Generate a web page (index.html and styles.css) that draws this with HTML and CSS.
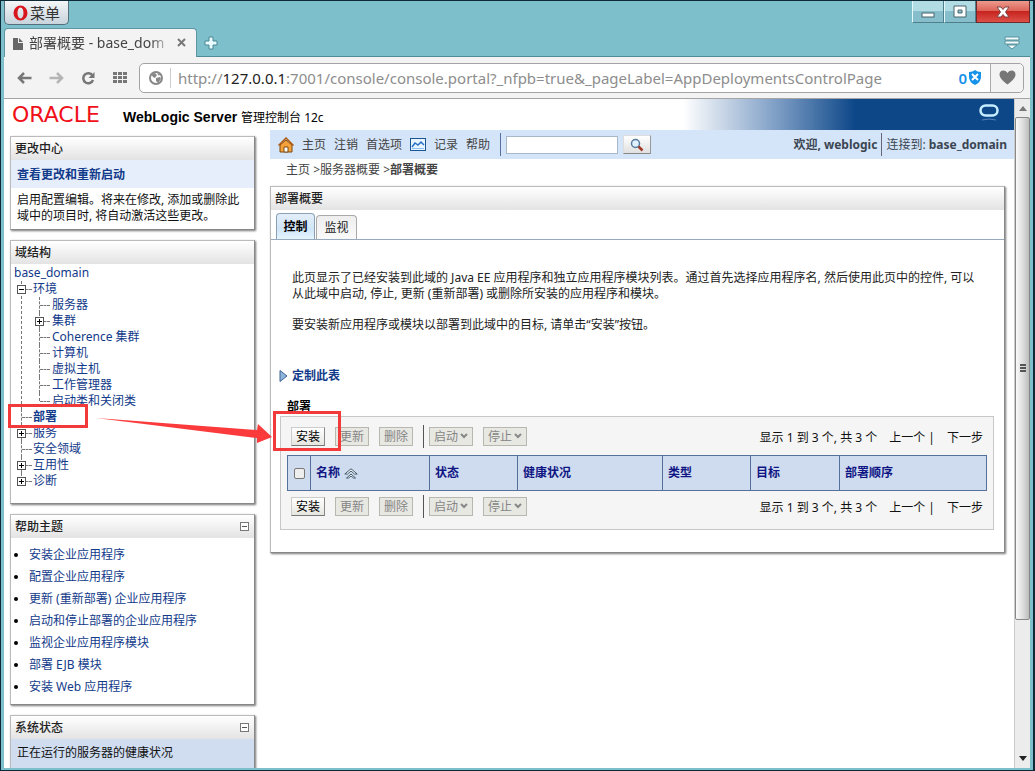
FILE: index.html
```html
<!DOCTYPE html>
<html lang="zh-CN">
<head>
<meta charset="utf-8">
<title>部署概要 - base_domain</title>
<link rel="stylesheet" href="styles.css">
</head>
<body>
<div class="window">
  <header class="titlebar">
    <button class="menu-btn" type="button">
      <svg width="15" height="16" viewBox="0 0 15 16"><path fill="#d8161d" fill-rule="evenodd" d="M7.500.5a7 7.500 0 1 1 0 15a7 7.500 0 0 1 0-15zM7.500 2.500c-4 0-4 11 0 11s4-11 0-11z"/></svg>
      菜单
    </button>
    <div class="win-btns">
      <button type="button" aria-label="最小化"><svg width="14" height="14"><rect x="1" y="8" width="12" height="4" fill="#fff" stroke="#49656b"/></svg></button>
      <button type="button" aria-label="最大化"><svg width="14" height="14"><path d="M1 1h12v11H1zM5 5h4v3H5z" fill="#fff" fill-rule="evenodd" stroke="#49656b"/></svg></button>
      <button type="button" class="close" aria-label="关闭"><svg width="14" height="14"><path d="M1 2h4l2 2.500L9 2h4L9.500 7l3.500 5H9L7 9.500 5 12H1l3.500-5z" fill="#fff" stroke="#7b4545"/></svg></button>
    </div>
  </header>
  <div class="tabstrip">
    <div class="tab">
      <svg width="12" height="13"><path d="M1 1h5v5h5v7H1zM7 1l4 4H7z" fill="#666"/></svg>
      <span class="tab-title">部署概要 - base_dom</span>
      <button type="button" class="plain" aria-label="关闭标签"><svg width="10" height="10"><path d="M1 1l7 7M8 1l-7 7" stroke="#777" stroke-width="2"/></svg></button>
    </div>
    <button type="button" class="plain newtab" aria-label="新标签"><svg width="14" height="14"><path d="M5 1h4v4h4v4H9v4H5V9H1V5h4z" fill="#e9fbff" stroke="#498793"/></svg></button>
    <button type="button" class="plain tabmenu" aria-label="标签菜单"><svg width="16" height="14"><path d="M1 1h14v3H1zM1 5h14v3H1zM3 9h10l-5 4z" fill="#f4feff" stroke="#58909b"/></svg></button>
  </div>
  <nav class="navbar">
    <button type="button" class="plain" aria-label="后退"><svg width="15" height="14"><path d="M7 2L2 7l5 5M2 7h12.500" fill="none" stroke="#777" stroke-width="2.500"/></svg></button>
    <button type="button" class="plain" aria-label="前进"><svg width="15" height="14"><path d="M8 2l5 5-5 5M13 7H.5" fill="none" stroke="#b5b5b5" stroke-width="2.500"/></svg></button>
    <button type="button" class="plain" aria-label="刷新"><svg width="15" height="14"><path d="M11.500 4.500A5 5 0 1 0 12 9" fill="none" stroke="#777" stroke-width="2.500"/><path d="M13.500 1v6H7.500z" fill="#777"/></svg></button>
    <button type="button" class="plain" aria-label="快速拨号"><svg width="15" height="14"><path d="M0 1h4v3H0zM5 1h4v3H5zM10 1h4v3h-4zM0 5h4v3H0zM5 5h4v3H5zM10 5h4v3h-4zM0 9h4v3H0zM5 9h4v3H5zM10 9h4v3h-4z" fill="#777"/></svg></button>
    <div class="address">
      <svg class="globe" width="16" height="16"><circle cx="8" cy="8" r="6" fill="#fff" stroke="#888" stroke-width="2"/><path d="M3 4l4-1 2 2-2 3-2-1zM8 8l4-1 1 2-3 4-2-2zM9 3l3 1-1 2z" fill="#888"/></svg>
      <span class="url">http://<b>127.0.0.1</b>:7001/console/console.portal?_nfpb=true&amp;_pageLabel=AppDeploymentsControlPage</span>
      <span class="blocked">0<svg width="12" height="15"><path d="M0 2q4 0 6-2 2 2 6 2v5q0 5-6 8-6-3-6-8z" fill="#1592ea"/><path d="M3 4l6 6M9 4l-6 6" stroke="#fff" stroke-width="2"/></svg></span>
      <button type="button" class="heart" aria-label="收藏"><svg width="17" height="15"><path d="M8.500 14.500C4 11 .5 8 .5 4.500.5 0 6-1 8.500 3 11-1 16.500 0 16.500 4.500c0 3.500-3.500 6.500-8 10z" fill="#777"/></svg></button>
    </div>
  </nav>

  <div class="viewport">
    <div class="page">
      <div class="brand">
        <span class="oracle">ORACLE</span>
        <h1>WebLogic Server <span>管理控制台 12c</span></h1>
        <div class="brand-fade"><svg width="20" height="18"><rect x="1.500" y="1.500" width="17" height="10" rx="5" fill="none" stroke="#c5ecff" stroke-width="2.500"/><path d="M3 16q7-2 14 0" fill="none" stroke="#5585ba"/></svg></div>
      </div>
      <div class="columns">
        <aside class="side">
          <section class="panel">
            <h2>更改中心</h2>
            <h3><a href="#">查看更改和重新启动</a></h3>
            <p>启用配置编辑。将来在修改, 添加或删除此域中的项目时, 将自动激活这些更改。</p>
          </section>
          <section class="panel">
            <h2>域结构</h2>
            <div class="tree">
              <a href="#">base_domain</a>
              <ul>
                <li class="minus"><a href="#">环境</a>
                  <ul>
                    <li><a href="#">服务器</a></li>
                    <li class="plus"><a href="#">集群</a></li>
                    <li><a href="#">Coherence 集群</a></li>
                    <li><a href="#">计算机</a></li>
                    <li><a href="#">虚拟主机</a></li>
                    <li><a href="#">工作管理器</a></li>
                    <li><a href="#">启动类和关闭类</a></li>
                  </ul>
                </li>
                <li class="current"><a href="#">部署</a></li>
                <li class="plus"><a href="#">服务</a></li>
                <li><a href="#">安全领域</a></li>
                <li class="plus"><a href="#">互用性</a></li>
                <li class="plus"><a href="#">诊断</a></li>
              </ul>
            </div>
          </section>
          <section class="panel">
            <h2>帮助主题<button type="button" class="fold" aria-label="折叠"></button></h2>
            <ul class="help">
              <li><a href="#">安装企业应用程序</a></li>
              <li><a href="#">配置企业应用程序</a></li>
              <li><a href="#">更新 (重新部署) 企业应用程序</a></li>
              <li><a href="#">启动和停止部署的企业应用程序</a></li>
              <li><a href="#">监视企业应用程序模块</a></li>
              <li><a href="#">部署 EJB 模块</a></li>
              <li><a href="#">安装 Web 应用程序</a></li>
            </ul>
          </section>
          <section class="panel">
            <h2>系统状态<button type="button" class="fold" aria-label="折叠"></button></h2>
            <p class="health">正在运行的服务器的健康状况</p>
          </section>
        </aside>

        <main class="main">
          <div class="topbar">
            <svg width="16" height="16"><path d="M2 8v7h12V8L8 3z" fill="#f7a13b" stroke="#7b4a15"/><path d="M.5 8.500L8 1l7.500 7.500" fill="none" stroke="#b05a12" stroke-width="1.500"/><path d="M6 15v-5h4v5z" fill="#fff" stroke="#7b4a15"/></svg>
            <a href="#">主页</a><a href="#">注销</a><a href="#">首选项</a>
            <svg width="16" height="13"><rect x=".5" y=".5" width="15" height="12" fill="#e8f4ff" stroke="#1c5594"/><path d="M2 9l3-4 3 2 3-3 3 3" fill="none" stroke="#2a72c8" stroke-width="1.500"/><path d="M2 10h12v1H2z" fill="#8cc0ee"/></svg>
            <a href="#">记录</a><a href="#">帮助</a>
            <form class="search">
              <input type="text" aria-label="搜索">
              <button type="button" aria-label="搜索"><svg width="14" height="14"><circle cx="5.500" cy="5.500" r="4" fill="#dff1ff" stroke="#557a9c" stroke-width="1.500"/><path d="M8.500 8.500l4 4" stroke="#a03a2a" stroke-width="2.500"/></svg></button>
            </form>
            <strong class="welcome">欢迎, weblogic</strong>
            <span class="connected">连接到: <strong>base_domain</strong></span>
          </div>
          <div class="crumbs"><a href="#">主页</a> &gt;<a href="#">服务器概要</a> &gt;<strong>部署概要</strong></div>

          <section class="panel content">
            <h2>部署概要</h2>
            <div class="tabs"><button type="button" class="on">控制</button><button type="button">监视</button></div>
            <div class="intro">
              <p>此页显示了已经安装到此域的 Java EE 应用程序和独立应用程序模块列表。通过首先选择应用程序名, 然后使用此页中的控件, 可以从此域中启动, 停止, 更新 (重新部署) 或删除所安装的应用程序和模块。</p>
              <p>要安装新应用程序或模块以部署到此域中的目标, 请单击“安装”按钮。</p>
            </div>
            <a class="customize" href="#"><svg width="9" height="12"><path d="M1 .5L8 6l-7 5.500z" fill="#8db4da" stroke="#3d6594"/></svg>定制此表</a>
            <h4>部署</h4>
            <div class="tablebox">
              <div class="actions">
                <span class="marked"><button type="button">安装</button></span>
                <button type="button" disabled>更新</button>
                <button type="button" disabled>删除</button>
                <i class="sep"></i>
                <button type="button" class="drop" disabled>启动<svg width="8" height="6"><path d="M1 1l3 3 3-3" fill="none" stroke="#888" stroke-width="2"/></svg></button>
                <button type="button" class="drop" disabled>停止<svg width="8" height="6"><path d="M1 1l3 3 3-3" fill="none" stroke="#888" stroke-width="2"/></svg></button>
                <span class="pager"><span>显示 1 到 3 个, 共 3 个</span><span>上一个 |</span><span>下一步</span></span>
              </div>
              <table>
                <colgroup><col class="c-check"><col class="c-name"><col class="c-state"><col class="c-health"><col class="c-type"><col class="c-target"><col></colgroup>
                <thead><tr>
                  <th class="check"><input type="checkbox" aria-label="全选"></th>
                  <th><a href="#">名称 <svg width="14" height="11"><path d="M.8 6L7 .8 13.200 6h-2.700L7 3 3.500 6zM2.500 10L7 6l4.500 4H9.500L7 8l-2.500 2z" fill="#fff" stroke="#40586c"/></svg></a></th>
                  <th><a href="#">状态</a></th>
                  <th>健康状况</th>
                  <th><a href="#">类型</a></th>
                  <th><a href="#">目标</a></th>
                  <th><a href="#">部署顺序</a></th>
                </tr></thead>
              </table>
              <div class="actions">
                <span><button type="button">安装</button></span>
                <button type="button" disabled>更新</button>
                <button type="button" disabled>删除</button>
                <i class="sep"></i>
                <button type="button" class="drop" disabled>启动<svg width="8" height="6"><path d="M1 1l3 3 3-3" fill="none" stroke="#888" stroke-width="2"/></svg></button>
                <button type="button" class="drop" disabled>停止<svg width="8" height="6"><path d="M1 1l3 3 3-3" fill="none" stroke="#888" stroke-width="2"/></svg></button>
                <span class="pager"><span>显示 1 到 3 个, 共 3 个</span><span>上一个 |</span><span>下一步</span></span>
              </div>
            </div>
          </section>
        </main>
      </div>
      <svg class="arrow" width="180" height="32"><path d="M0 1L161 13l1-6 14 13-15 6v-5z" fill="#fb3b3b"/></svg>
    </div>
    <div class="scrollbar">
      <svg class="up" width="8" height="5"><path d="M0 5l4-5 4 5z" fill="#777"/></svg>
      <div class="thumb"><i></i><i></i><i></i></div>
      <div class="track"></div>
      <svg class="down" width="8" height="5"><path d="M0 0l4 5 4-5z" fill="#222"/></svg>
    </div>
  </div>
</div>
</body>
</html>
```
FILE: styles.css
```css
*, *::before, *::after { box-sizing: border-box; }
body, h1, h2, h3, h4, p, ul { margin: 0; padding: 0; }
body {
  font: 12px/16px "Noto Sans", "Noto Sans CJK SC", sans-serif;
  color: #222;
}
button { font: inherit; color: inherit; margin: 0; padding: 0; }
a { color: #123a8a; text-decoration: none; }
svg { display: block; flex: none; }

.window {
  display: flex;
  flex-direction: column;
  height: 100vh;
  overflow: hidden;
  background: #7dbfcb;
  border: 1px solid #0e2a38;
  border-width: 1px 2px 1px 1px;
  padding: 0 3px 2px 3px;
}
.titlebar { display: flex; justify-content: space-between; height: 29px; flex: none; }
.menu-btn {
  display: flex;
  align-items: center;
  justify-content: center;
  gap: 2px;
  width: 65px;
  height: 24px;
  font-size: 15px;
  color: #333;
  background: linear-gradient(#f4f6f7, #c8d3dc);
  border: 1px solid #54707c;
  border-top: 0;
  border-radius: 0 0 5px 5px;
}
.win-btns { display: flex; }
.win-btns button {
  display: grid;
  place-items: center;
  width: 32px;
  height: 22px;
  border: 1px solid #4e7f8b;
  border-top: 0;
  border-left-color: #e5f8fb;
  background: linear-gradient(#b2dce4 50%, #86bfcb 50%);
}
.win-btns .close { width: 54px; background: linear-gradient(#ec9a8c, #dc6055 50%, #c7241f 50%, #dd4f46); border-color: #6c2a2c; }

.plain { display: grid; place-items: center; border: 0; background: none; }
.tabstrip { display: flex; align-items: flex-end; height: 27px; flex: none; border-bottom: 1px solid #4e8c98; }
.tab {
  display: flex;
  align-items: center;
  gap: 5px;
  width: 193px;
  height: 29px;
  margin-bottom: -1px;
  padding: 0 9px 0 7px;
  background: #f3f3f3;
  border: 1px solid #5c97a3;
  border-bottom: 0;
  border-radius: 4px 4px 0 0;
}
.tab-title {
  flex: 1;
  font-size: 14px;
  line-height: 22px;
  color: #444;
  white-space: nowrap;
  overflow: hidden;
  -webkit-mask-image: linear-gradient(90deg, #000 85%, transparent);
  mask-image: linear-gradient(90deg, #000 85%, transparent);
}
.newtab { margin: 0 auto 6px 7px; }
.tabmenu { margin: 0 10px 6px 0; }

.navbar {
  display: flex;
  align-items: center;
  gap: 17px;
  height: 42px;
  flex: none;
  padding: 0 6px 0 13px;
  background: #f3f3f3;
  border-bottom: 1px solid #a5a5a5;
}
.address {
  display: flex;
  align-items: center;
  flex: 1;
  min-width: 0;
  height: 30px;
  margin-left: -6px;
  background: #fff;
  border: 1px solid #a3a3a3;
  border-radius: 5px;
}
.globe { margin: 0 6px 0 8px; }
.url {
  flex: 1;
  min-width: 0;
  overflow: hidden;
  white-space: nowrap;
  padding-left: 7px;
  border-left: 1px solid #ccc;
  font-size: 15px;
  line-height: 20px;
  color: #8d8d8d;
}
.url b { font-weight: 400; color: #222; }
.blocked { display: flex; align-items: center; gap: 2px; margin: 0 9px; font-size: 15px; font-weight: 600; color: #1592ea; }
.heart { display: grid; place-items: center; width: 33px; height: 28px; border: 0; border-left: 1px solid #aaa; border-radius: 0 5px 5px 0; background: #f3f3f3; }

.viewport { display: flex; flex: 1; min-height: 0; background: #fff; }
.page { position: relative; flex: 1; min-width: 0; overflow: hidden; }
.brand { display: flex; align-items: center; height: 31px; padding-left: 8px; }
.oracle { width: 111px; font: 22px/24px "DejaVu Sans", sans-serif; color: #f01018; }
.brand h1 { font: bold 14px/18px "Liberation Sans", Arial, sans-serif; color: #000; white-space: nowrap; padding-top: 4px; }
.brand h1 span { font: 12px/16px "Noto Sans", "Noto Sans CJK SC", sans-serif; }
.brand-fade {
  display: flex;
  justify-content: flex-end;
  align-self: stretch;
  flex: none;
  width: 33%;
  margin-left: auto;
  padding: 5px 15px 0 0;
  background: linear-gradient(90deg, #fff, #7f9fc6 28%, #0d4788 52%);
}

.columns { display: grid; grid-template-columns: 245px 1fr; gap: 15px; padding-left: 6px; }
.side { display: flex; flex-direction: column; gap: 10px; padding-top: 6px; }
.panel { border: 1px solid #bbb; border-right-color: #888; border-bottom-color: #888; box-shadow: 1px 1px 2px #777; background: #fff; }
.panel h2 {
  display: flex;
  align-items: center;
  justify-content: space-between;
  height: 23px;
  padding: 0 5px 0 4px;
  font-size: 12px;
  font-weight: 500;
  background: linear-gradient(#fff, #e3e3e3);
}
.panel h3 { height: 28px; padding: 7px 6px 5px; font-size: 12px; line-height: 16px; background: #e6eefb; }
.side .panel p { padding: 4px 6px 5px; color: #111; }
.side .panel .health { padding: 6px 6px 24px; background: #d0ddf0; }
.fold { width: 9px; height: 9px; border: 1px solid #777; background: linear-gradient(#555, #555) center / 5px 1px no-repeat #fff; }

.tree { padding: 1px 3px 14px; }
.tree ul { list-style: none; }
.tree > ul { margin-left: 3px; }
.tree li { position: relative; padding-left: 16px; }
.tree li li { padding-left: 17px; }
.tree li > a { display: block; }
.tree ul ul { margin-left: 2px; }
.tree a { line-height: 16px; }
.tree li::before {
  content: "";
  position: absolute;
  left: 4px;
  top: 0;
  bottom: 0;
  border-left: 1px dashed #777;
}
.tree li:last-child::before { bottom: auto; height: 8px; }
.tree li > a::before { content: ""; position: absolute; left: 5px; top: 8px; width: 10px; border-top: 1px dashed #777; }
.plus::after, .minus::after {
  content: "";
  position: absolute;
  left: 0;
  top: 4px;
  width: 9px;
  height: 9px;
  border: 1px solid #555;
  background: linear-gradient(#000, #000) center / 5px 1px no-repeat, linear-gradient(#000, #000) center / 1px 5px no-repeat #fff;
}
.minus::after { background: linear-gradient(#000, #000) center / 5px 1px no-repeat #fff; }
.current { font-weight: 700; }
.current::after {
  content: "";
  position: absolute;
  z-index: 1;
  left: -9px;
  top: -5px;
  width: 80px;
  height: 24px;
  border: 3px solid #f33a3a;
  pointer-events: none;
}

.help { list-style-position: outside; padding: 6px 4px 6px 18px; }
.help li { line-height: 22px; }
.help li::marker { color: #000; font-size: 12px; }

.main { min-width: 0; }
.topbar { display: flex; align-items: center; gap: 8px; height: 29px; padding: 0 7px 0 8px; background: #d5e5f9; white-space: nowrap; }
.topbar a, .crumbs a { color: #444; }
.search { display: flex; align-items: center; gap: 5px; margin-left: 2px; padding-left: 5px; height: 23px; border-left: 1px solid #55719b; }
.search input { width: 112px; height: 18px; padding: 0 2px; border: 1px solid #a9b8c8; background: #fff; }
.search button { display: grid; place-items: center; width: 28px; height: 19px; border: 1px solid #c9c9c9; border-color: #ddd #999 #888 #ddd; background: linear-gradient(#fff, #e0e0e0); }
.welcome { margin-left: auto; color: #3b4552; }
.connected { padding-left: 4px; margin-left: -4px; border-left: 1px solid #667; color: #3b4552; line-height: 23px; }
.crumbs { padding: 3px 16px 8px; color: #444; }
.content { margin-right: 9px; padding-bottom: 22px; }
.tabs { display: flex; align-items: flex-end; gap: 1px; height: 30px; padding-left: 5px; border-bottom: 1px solid #97aabd; }
.tabs button { width: 41px; height: 24px; border: 1px solid #aaa; border-bottom: 0; border-radius: 4px 4px 0 0; background: linear-gradient(#eee, #fafafa); }
.tabs .on { width: 39px; height: 26px; font-weight: 700; border-color: #8ba0b5; background: linear-gradient(#e4eefa, #cfe5f7 60%, #e5f5fd); color: #000; }
.intro { padding: 30px 20px 0 21px; }
.intro p { margin-bottom: 15px; }
.customize { display: flex; align-items: center; gap: 4px; margin-top: 35px; padding-left: 8px; font-weight: 700; }
.content h4 { margin-top: 15px; padding-left: 16px; font-size: 12px; font-weight: 600; color: #000; }
.tablebox { margin: 1px 10px 0 9px; padding: 9px 6px 13px; background: #f5f5f5; border: 1px solid #c8c8c8; }
.actions { display: flex; align-items: center; height: 20px; padding: 0 4px; }
.actions button { display: block; width: 34px; height: 19px; margin-right: 10px; line-height: 17px; background: linear-gradient(#fff, #e6e6e0); border: 1px solid #ccc; border-right-color: #888; border-bottom-color: #777; color: #000; }
.actions button:disabled { color: #858585; background: #e8e8e3; border-color: #b8b8b0; }
.actions .drop { display: flex; align-items: center; justify-content: center; gap: 2px; width: 44px; }
.sep { width: 1px; height: 23px; margin-right: 5px; background: #555; }
.marked { position: relative; }
.marked::after { content: ""; position: absolute; left: -18px; top: -16px; width: 68px; height: 40px; border: 3px solid #f33a3a; pointer-events: none; }
.pager { display: flex; gap: 12px; margin-left: auto; padding-top: 4px; color: #111; white-space: nowrap; }
table { width: 100%; margin: 9px 0 5px; table-layout: fixed; border-collapse: collapse; background: #cfdcef; }
th { height: 35px; padding: 0 5px; border: 1px solid #54719b; text-align: left; font-size: 12px; color: #0f1684; }
th a { display: flex; align-items: center; gap: 4px; color: #0f1684; }
.check { padding: 0; text-align: center; }
.check input { appearance: none; display: block; margin: 0 auto; width: 11px; height: 11px; border: 1px solid #777; border-radius: 2px; background: #eee; }
.c-check { width: 23px; }
.c-name { width: 119px; }
.c-state { width: 88px; }
.c-health { width: 145px; }
.c-type { width: 88px; }
.c-target { width: 89px; }
.arrow { position: absolute; left: 92px; top: 318px; pointer-events: none; }

.scrollbar { display: flex; flex-direction: column; align-items: center; width: 16px; background: #ececec; border-left: 1px solid #ccc; }
.up { margin: 7px 0 6px; }
.thumb { display: flex; flex-direction: column; align-items: center; justify-content: center; gap: 1px; flex: 500 0 0; align-self: stretch; border: 1px solid #888; border-radius: 2px; background: linear-gradient(90deg, #fafafa, #d9d9d9 60%, #bbb); }
.thumb i { width: 6px; height: 2px; background: #555; }
.track { flex: 136 0 0; }
.down { margin-bottom: 7px; }
```
